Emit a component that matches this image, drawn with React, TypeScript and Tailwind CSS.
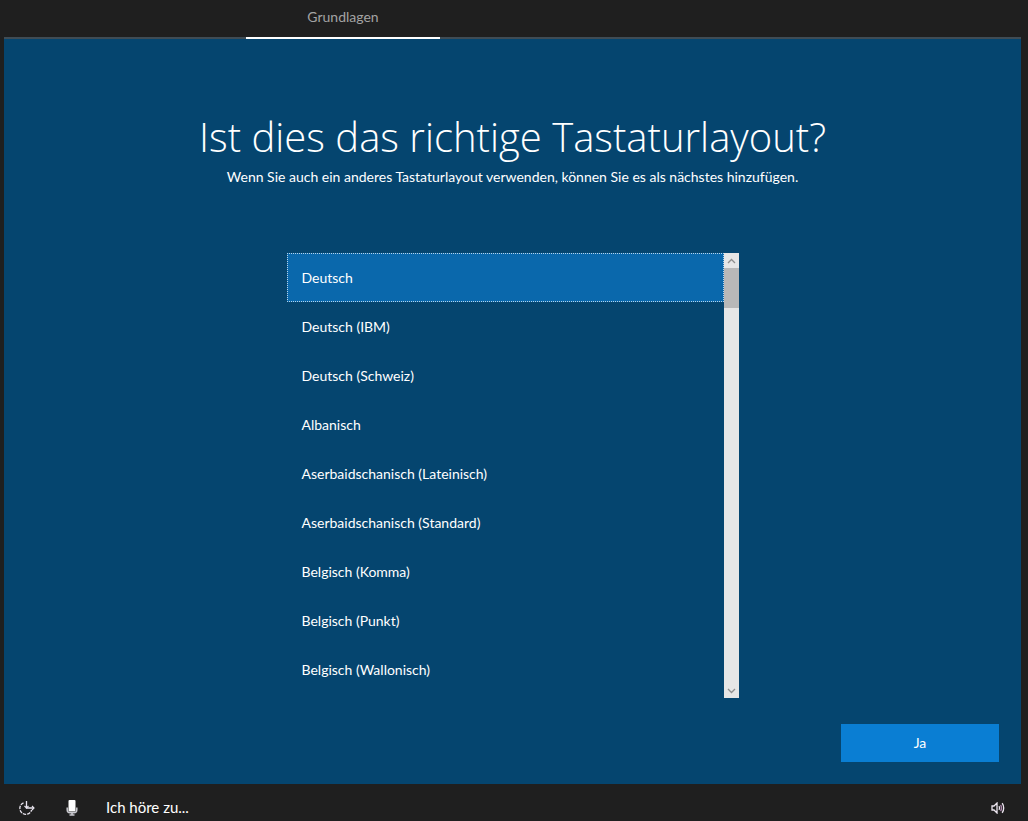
import { useState } from 'react';

const layouts = [
  'Deutsch',
  'Deutsch (IBM)',
  'Deutsch (Schweiz)',
  'Albanisch',
  'Aserbaidschanisch (Lateinisch)',
  'Aserbaidschanisch (Standard)',
  'Belgisch (Komma)',
  'Belgisch (Punkt)',
  'Belgisch (Wallonisch)',
];

function EaseOfAccessIcon() {
  return (
    <svg width="18" height="16" viewBox="0 0 18 16" fill="none" stroke="#e8e4ee" strokeWidth="1.3">
      <path d="M5.5 2.8A6 6 0 1 0 13.6 10" strokeDasharray="3.4 1" />
      <path d="M8.5 1v7H16" />
      <path d="M6.5 6l2 2 2-2M14 6l2 2-2 2" strokeWidth="1.1" />
    </svg>
  );
}

function MicIcon() {
  return (
    <svg width="12" height="16" viewBox="0 0 12 16" fill="none">
      <rect x="2.5" y="0" width="7" height="11.5" rx="1" fill="#ffffff" />
      <path d="M1.2 7.5v2.2q0 3 2.8 3h4q2.8 0 2.8-3V7.5" stroke="#c9c9cf" strokeWidth="1.5" />
      <path d="M6 12.5v2M3.5 15h5" stroke="#c9c9cf" strokeWidth="1.6" />
    </svg>
  );
}

function SpeakerIcon() {
  return (
    <svg width="14" height="12" viewBox="0 0 14 12" fill="none" stroke="#ece6f0" strokeWidth="1.3">
      <path d="M1 4h2l3-3v10L3 8H1z" />
      <path d="M8 4.2q1.2 1.8 0 3.6" />
      <path d="M9.6 2.8q2 3.2 0 6.4" stroke="#a884a8" />
      <path d="M11.2 1.2q3 4.8 0 9.6" />
    </svg>
  );
}

function Chevron({ d }: { d: string }) {
  return (
    <svg width="9" height="6" viewBox="0 0 9 6" fill="none" stroke="#8f8f8f" strokeWidth="1.3">
      <path d={d} />
    </svg>
  );
}

export default function App() {
  const [selected, setSelected] = useState('Deutsch');

  return (
    <div className="flex min-h-screen flex-col bg-[#1f1f1f] pr-[7px] pl-1 font-['Lato','Open_Sans',sans-serif] text-sm text-white">
      <nav className="flex h-[39px]">
        <div className="w-[242px] border-b-2 border-[#3f4c55]" />
        <a
          href="#grundlagen"
          className="flex w-[194px] items-center justify-center border-b-2 border-white pb-1 text-[#a3a3a3]"
        >
          Grundlagen
        </a>
        <div className="flex-1 border-b-2 border-[#3f4c55]" />
      </nav>

      <main className="flex flex-1 flex-col items-center bg-[#05456f] px-[22px] pt-[72px] pb-[22px]">
        <h1 className="text-center font-['Open_Sans',sans-serif] text-[40px] leading-[52px] font-light">
          Ist dies das richtige Tastaturlayout?
        </h1>
        <p className="mt-1 text-center leading-5">
          Wenn Sie auch ein anderes Tastaturlayout verwenden, können Sie es als nächstes hinzufügen.
        </p>

        <div className="mt-[66px] flex w-full max-w-[452px]">
          <div role="listbox" aria-label="Tastaturlayout" className="flex-1 pb-1">
            {layouts.map((name) => (
              <button
                key={name}
                type="button"
                role="option"
                aria-selected={selected === name}
                onClick={() => setSelected(name)}
                className={
                  selected === name
                    ? 'block h-[49px] w-full border border-dotted border-[#b5d3ea] bg-[#0a68ac] px-[14px] text-left'
                    : 'block h-[49px] w-full border border-transparent px-[14px] text-left hover:bg-white/10'
                }
              >
                {name}
              </button>
            ))}
          </div>
          <div className="flex w-[15px] flex-col bg-[#e6e6e6]">
            <button type="button" aria-label="Nach oben" className="flex h-[15px] items-center justify-center">
              <Chevron d="M1 5l3.5-3.5L8 5" />
            </button>
            <div className="h-10 bg-[#b8b8b8]" />
            <div className="flex-1" />
            <button type="button" aria-label="Nach unten" className="flex h-[15px] items-center justify-center">
              <Chevron d="M1 1l3.5 3.5L8 1" />
            </button>
          </div>
        </div>

        <button type="button" className="mt-auto h-[38px] w-[158px] self-end bg-[#0a7ed3] hover:bg-[#2b8fdb]">
          Ja
        </button>
      </main>

      <footer className="flex h-[37px] items-center pt-[10px] pr-4 pl-[14px]">
        <button type="button" aria-label="Erleichterte Bedienung">
          <EaseOfAccessIcon />
        </button>
        <button type="button" aria-label="Mikrofon" className="ml-[30px]">
          <MicIcon />
        </button>
        <span className="ml-7 text-[15px]">Ich höre zu...</span>
        <button type="button" aria-label="Lautstärke" className="ml-auto">
          <SpeakerIcon />
        </button>
      </footer>
    </div>
  );
}
